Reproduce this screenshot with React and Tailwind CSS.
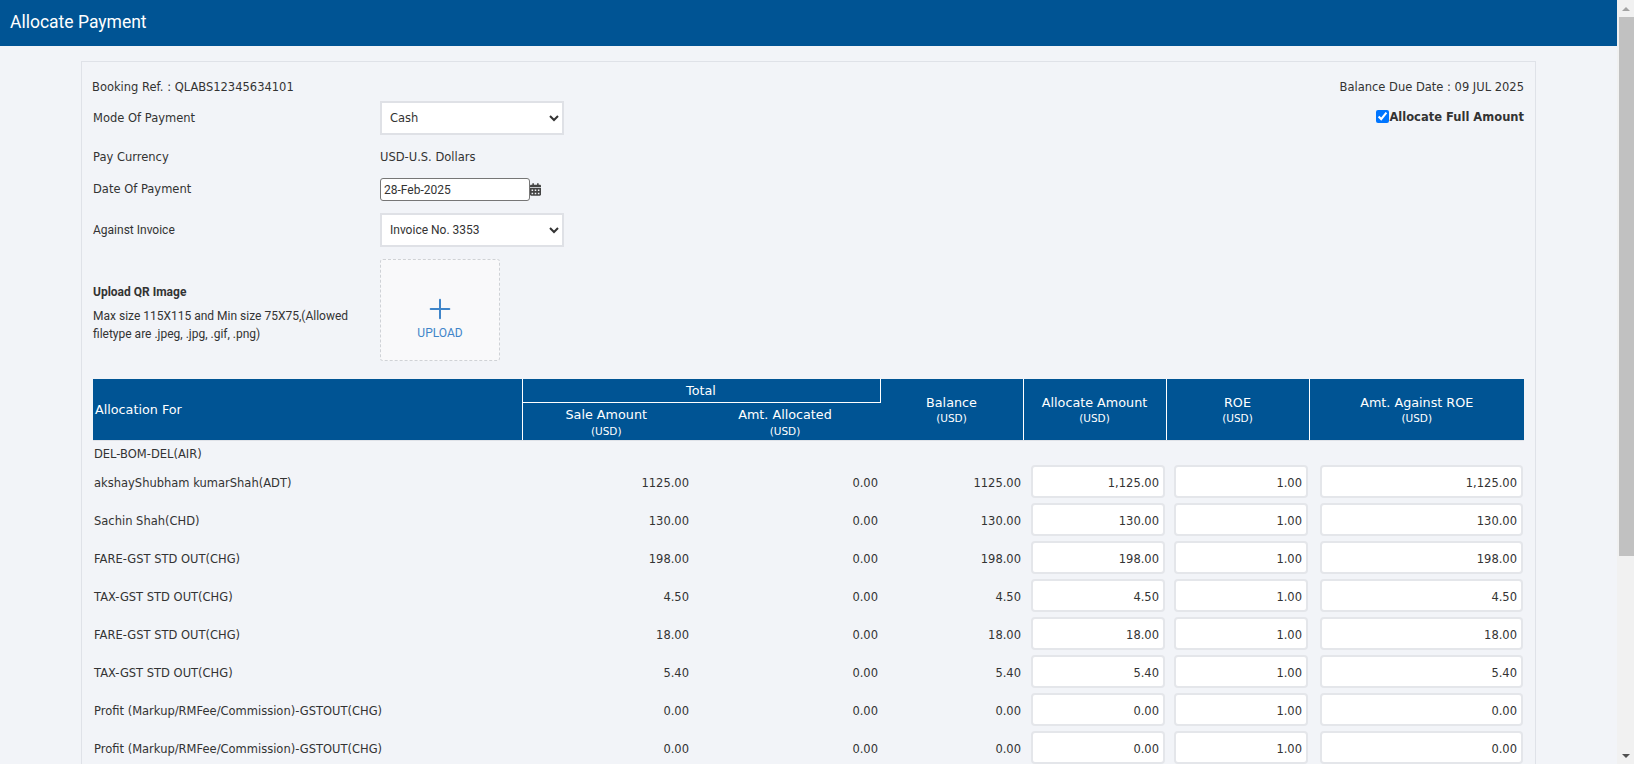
import { Plus } from 'lucide-react'
import { FaCalendarAlt } from 'react-icons/fa'

const rows = [
  ['akshayShubham kumarShah(ADT)', '1125.00', '1,125.00'],
  ['Sachin Shah(CHD)', '130.00', '130.00'],
  ['FARE-GST STD OUT(CHG)', '198.00', '198.00'],
  ['TAX-GST STD OUT(CHG)', '4.50', '4.50'],
  ['FARE-GST STD OUT(CHG)', '18.00', '18.00'],
  ['TAX-GST STD OUT(CHG)', '5.40', '5.40'],
  ['Profit (Markup/RMFee/Commission)-GSTOUT(CHG)', '0.00', '0.00'],
  ['Profit (Markup/RMFee/Commission)-GSTOUT(CHG)', '0.00', '0.00'],
]

const tahoma = "font-['DejaVu_Sans',sans-serif] text-[11.5px]"
const roboto = "font-['Roboto',sans-serif] text-[12px]"

function Usd() {
  return <div className="text-[10.5px] leading-[12px]">(USD)</div>
}

function AmountInput({ value, className }) {
  return (
    <input
      readOnly
      value={value}
      className={`block h-[33px] bg-white border-2 border-[#e4e6ea] rounded-[4px] text-right pr-[4px] pt-[2px] outline-none ${className}`}
    />
  )
}

function FormRow({ label, labelClass, className, children }) {
  return (
    <div className={`flex items-center ${className}`}>
      <div className={`w-[287px] shrink-0 ${labelClass}`}>{label}</div>
      {children}
    </div>
  )
}

function Scrollbar() {
  return (
    <div className="w-[17px] shrink-0 h-full bg-[#f1f1f1] flex flex-col items-center">
      <div className="h-[17px] shrink-0 flex items-center justify-center">
        <div className="w-0 h-0 border-x-[4px] border-x-transparent border-b-[4px] border-b-[#a3a3a3]" />
      </div>
      <div className="w-[15px] ml-[2px] h-[539px] shrink-0 bg-[#c1c1c1]" />
      <div className="flex-1" />
      <div className="h-[17px] shrink-0 flex items-center justify-center">
        <div className="w-0 h-0 border-x-[4px] border-x-transparent border-t-[4px] border-t-[#505050]" />
      </div>
    </div>
  )
}

export default function App() {
  return (
    <div className="flex h-screen overflow-hidden bg-[#f2f4f8] text-[#333]">
      <div className="flex-1 min-w-0 h-full overflow-hidden">
        <div className="h-[46px] bg-[#005494] flex items-center pl-[10px] pb-[1px] text-white font-['Roboto',sans-serif] text-[17.5px]">
          Allocate Payment
        </div>

        <div className="ml-[81px] mt-[15px] w-[1455px] border border-[#dfe2e8] px-[11px] pt-[12px]">
          <div className={`flex justify-between items-center h-[27px] -ml-[1px] ${tahoma}`}>
            <span>Booking Ref. : QLABS12345634101</span>
            <span>Balance Due Date : 09 JUL 2025</span>
          </div>

          <div className="flex justify-between items-start">
            <div>
              <FormRow label="Mode Of Payment" labelClass={`${tahoma} pt-[2px]`} className="h-[34px]">
                <select className={`w-[184px] h-[34px] bg-white border-2 border-[#dfe1e6] pl-[4px] ${tahoma}`}>
                  <option>Cash</option>
                </select>
              </FormRow>
              <FormRow label="Pay Currency" labelClass={`${tahoma} pt-[1px]`} className="h-[22px] mt-[11px]">
                <span className={`${tahoma} pt-[1px]`}>USD-U.S. Dollars</span>
              </FormRow>
              <FormRow label="Date Of Payment" labelClass={`${tahoma} pt-[1px]`} className="h-[23px] mt-[10px]">
                <input
                  readOnly
                  value="28-Feb-2025"
                  className={`w-[150px] h-[23px] bg-white border border-[#767676] rounded-[3px] pl-[3px] outline-none ${roboto}`}
                />
                <FaCalendarAlt className="text-[#444] w-[11px] h-[13px]" />
              </FormRow>
              <FormRow label="Against Invoice" labelClass={`${roboto} -mt-[1px]`} className="h-[34px] mt-[12px]">
                <select className={`w-[184px] h-[34px] bg-white border-2 border-[#dfe1e6] pl-[4px] ${roboto}`}>
                  <option>Invoice No. 3353</option>
                </select>
              </FormRow>
              <FormRow
                label={
                  <div className="pt-[5px]">
                    <div className="font-bold mb-[6px] leading-[18px]">Upload QR Image</div>
                    <div className="w-[262px] leading-[18px]">
                      Max size 115X115 and Min size 75X75,(Allowed filetype are .jpeg, .jpg, .gif, .png)
                    </div>
                  </div>
                }
                labelClass={roboto}
                className="h-[102px] mt-[12px]"
              >
                <div className="w-[120px] h-[102px] bg-[#f9f9fa] border border-dashed border-[#cfd2d6] rounded-[3px] flex flex-col items-center pt-[33px]">
                  <Plus className="w-[32px] h-[32px] text-[#3f85c9]" strokeWidth={1.5} />
                  <div className={`text-[#3f85c9] -mt-[1px] ${roboto}`}>UPLOAD</div>
                </div>
              </FormRow>
            </div>
            <label className="flex items-center font-['DejaVu_Sans',sans-serif] font-bold text-[11.5px] mt-[8px]">
              <input type="checkbox" defaultChecked className="w-[13px] h-[13px] m-0 -mt-[2px]" />
              Allocate Full Amount
            </label>
          </div>

          <table className={`mt-[18px] w-[1431px] table-fixed border-collapse ${tahoma}`}>
            <colgroup>
              <col className="w-[429px]" />
              <col className="w-[168px]" />
              <col className="w-[190px]" />
              <col className="w-[143px]" />
              <col className="w-[143px]" />
              <col className="w-[143px]" />
              <col className="w-[215px]" />
            </colgroup>
            <thead className="bg-[#005494] text-white text-[12.75px]">
              <tr className="h-[23px]">
                <th rowSpan={2} className="text-left font-normal pl-[2px] border-b border-[#dfe2e8]">Allocation For</th>
                <th colSpan={2} className="font-normal border-l border-r border-b border-white pt-[1px]">Total</th>
                <th rowSpan={2} className="font-normal border-b border-[#dfe2e8] pb-[2px]">Balance<Usd /></th>
                <th rowSpan={2} className="font-normal border-l border-white border-b-[#dfe2e8] border-b pb-[2px]">Allocate Amount<Usd /></th>
                <th rowSpan={2} className="font-normal border-l border-white border-b-[#dfe2e8] border-b pb-[2px]">ROE<Usd /></th>
                <th rowSpan={2} className="font-normal border-l border-white border-b-[#dfe2e8] border-b pb-[2px]">Amt. Against ROE<Usd /></th>
              </tr>
              <tr className="h-[38px]">
                <th className="font-normal border-l border-white border-b-[#dfe2e8] border-b">Sale Amount<Usd /></th>
                <th className="font-normal border-b border-[#dfe2e8]">Amt. Allocated<Usd /></th>
              </tr>
            </thead>
            <tbody>
              <tr className="h-[21px]">
                <td colSpan={7} className="pl-[1px] pt-[5px]">DEL-BOM-DEL(AIR)</td>
              </tr>
              {rows.map(([name, amount, allocated], i) => (
                <tr key={i} className="h-[38px]">
                  <td className="pl-[1px] pt-[4px]">{name}</td>
                  <td className="text-right pr-[1px] pt-[4px]">{amount}</td>
                  <td className="text-right pr-[2px] pt-[4px]">0.00</td>
                  <td className="text-right pr-[2px] pt-[4px]">{amount}</td>
                  <td className="pl-[8px]"><AmountInput value={allocated} className="w-[134px]" /></td>
                  <td className="pl-[8px]"><AmountInput value="1.00" className="w-[134px]" /></td>
                  <td className="pl-[11px]"><AmountInput value={allocated} className="w-[203px]" /></td>
                </tr>
              ))}
            </tbody>
          </table>
        </div>
      </div>
      <Scrollbar />
    </div>
  )
}
